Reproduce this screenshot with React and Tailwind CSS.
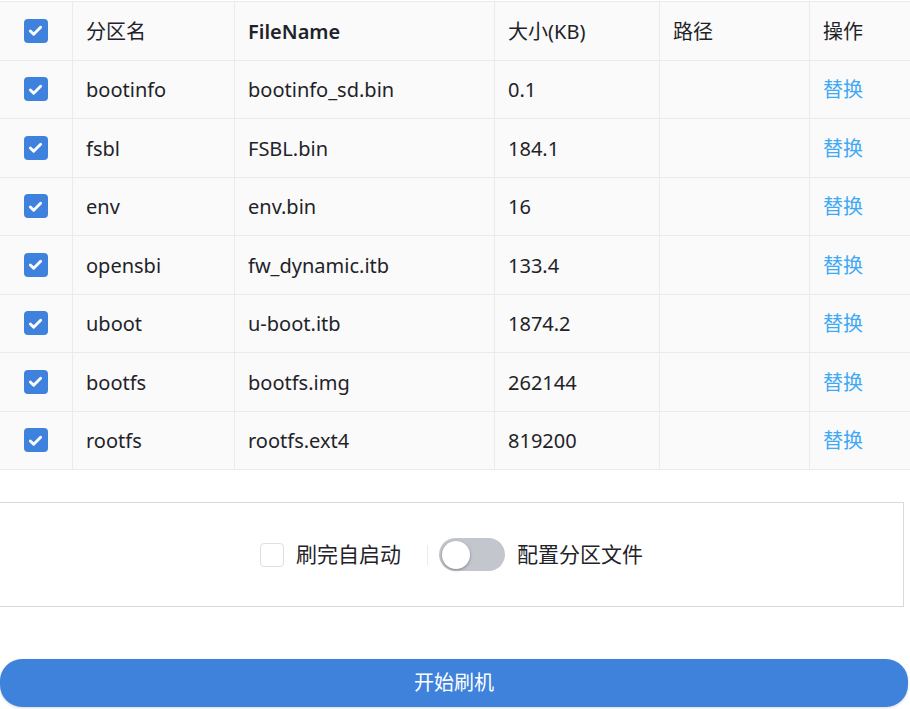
import React, { useState } from "react";

const rows = [
    { name: "bootinfo", file: "bootinfo_sd.bin", size: "0.1" },
    { name: "fsbl", file: "FSBL.bin", size: "184.1" },
    { name: "env", file: "env.bin", size: "16" },
    { name: "opensbi", file: "fw_dynamic.itb", size: "133.4" },
    { name: "uboot", file: "u-boot.itb", size: "1874.2" },
    { name: "bootfs", file: "bootfs.img", size: "262144" },
    { name: "rootfs", file: "rootfs.ext4", size: "819200" },
];

const Check = ({ checked }) =>
    checked ? (
        <span className="w-6 h-6 rounded-[4px] bg-[#3f82de] flex items-center justify-center">
            <svg viewBox="0 0 24 24" className="w-[19px] h-[19px]" fill="none" stroke="white" strokeWidth="3.6" strokeLinecap="round" strokeLinejoin="round">
                <path d="M5.5 12.5l4.2 4.2L18.5 8" />
            </svg>
        </span>
    ) : (
        <span className="w-6 h-6 rounded-[4px] border border-[#dcdfe6] bg-white" />
    );

const Cell = ({ className = "", children }) => (
    <div className={`flex items-center h-full border-r border-[#ebebeb] ${className}`}>
        {children}
    </div>
);

const Row = ({ children }) => (
    <div className="grid grid-cols-[73px_162px_260px_165px_150px_100px] h-[58.5px] border-b border-[#ebebeb] bg-[#fafafa]">
        {children}
    </div>
);

const App = () => {
    const [autoStart] = useState(false);

    return (
        <div
            className="w-[910px] h-[709px] bg-white overflow-hidden text-[20px] text-[#1f2329] pt-[1px]"
            style={{ fontFamily: '"Noto Sans", "Noto Sans CJK SC", sans-serif' }}
        >
            {/* Partition table */}
            <div className="border-t border-[#ebebeb]">
                <Row>
                    <Cell className="justify-center pr-[1px]">
                        <Check checked />
                    </Cell>
                    <Cell className="pl-[13px] pt-[2px]">分区名</Cell>
                    <Cell className="pl-[13px] pt-[2px] font-semibold">FileName</Cell>
                    <Cell className="pl-[13px] pt-[2px]">大小(KB)</Cell>
                    <Cell className="pl-[13px] pt-[2px]">路径</Cell>
                    <div className="flex items-center pl-[13px] pt-[2px]">操作</div>
                </Row>
                {rows.map((r) => (
                    <Row key={r.name}>
                        <Cell className="justify-center pr-[1px]">
                            <Check checked />
                        </Cell>
                        <Cell className="pl-[13px] pt-[2px]">{r.name}</Cell>
                        <Cell className="pl-[13px] pt-[2px]">{r.file}</Cell>
                        <Cell className="pl-[13px] pt-[2px]">{r.size}</Cell>
                        <Cell />
                        <div className="flex items-center pl-[13px] pt-[2px] text-[#3fa9f5]">替换</div>
                    </Row>
                ))}
            </div>

            {/* Options panel */}
            <div className="mt-[32px] w-[904px] h-[105px] border border-l-0 border-[#d9d9d9] flex items-center justify-center text-[21px]">
                <div className="flex items-center mr-[4px]">
                    <Check checked={autoStart} />
                    <span className="ml-3">刷完自启动</span>
                </div>
                <div className="w-px h-5 bg-[#ebebeb] ml-[22px] mr-[11px]" />
                <div className="flex items-center">
                    <span className="relative w-[66px] h-[33px] rounded-full bg-[#c3c6cc]">
                        <span className="absolute left-[3px] top-[2.5px] w-[28px] h-[28px] rounded-full bg-white shadow-[0_1px_3px_rgba(0,0,0,0.35)]" />
                    </span>
                    <span className="ml-3">配置分区文件</span>
                </div>
            </div>

            {/* Start button */}
            <button className="mt-[52px] w-[908px] h-[48px] rounded-[22px] bg-[#3f82db] text-white text-[20px] shadow-[0_1px_3px_rgba(0,0,0,0.15)]">
                开始刷机
            </button>
        </div>
    );
};

export default App;
